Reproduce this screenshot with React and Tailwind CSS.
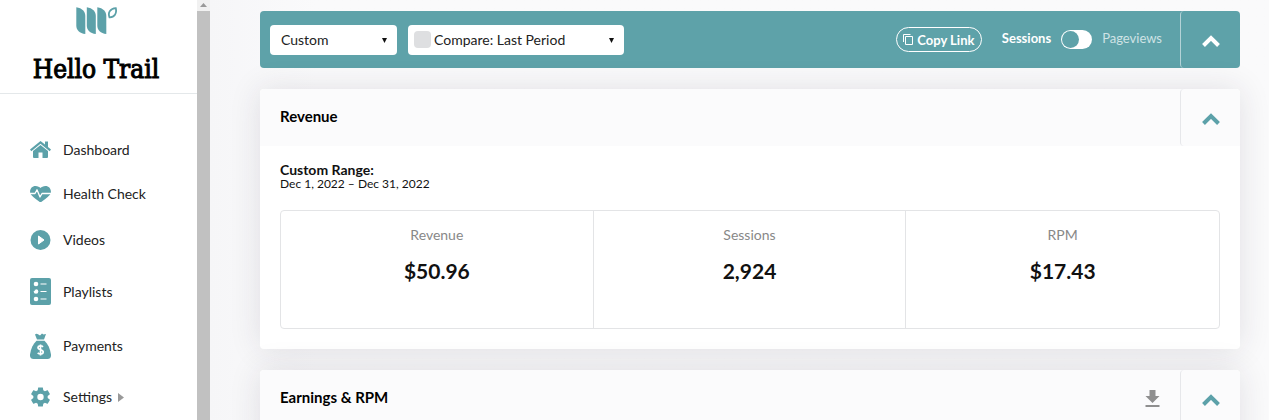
import { useState } from 'react'

const navItems = [
  { label: 'Dashboard', icon: HomeIcon },
  { label: 'Health Check', icon: HeartIcon },
  { label: 'Videos', icon: PlayIcon },
  { label: 'Playlists', icon: PlaylistIcon },
  { label: 'Payments', icon: MoneyBagIcon },
  { label: 'Settings', icon: GearIcon, hasChildren: true },
]

const stats = [
  { label: 'Revenue', value: '$50.96' },
  { label: 'Sessions', value: '2,924' },
  { label: 'RPM', value: '$17.43' },
]

function Logo() {
  return (
    <svg width="41" height="28" viewBox="0 0 41 28" fill="#5ca1a9" aria-hidden="true">
      <path d="M0.300 0.300C6 1 9.300 4.500 9.300 9V27C3.500 26.500 0.300 23 0.300 18.500Z" />
      <path d="M10.800 0.300C16.500 1 19.800 4.500 19.800 9V27C14 26.500 10.800 23 10.800 18.500Z" />
      <path d="M21.300 0.300C27 1 30.300 4.500 30.300 9V27C24.500 26.500 21.300 23 21.300 18.500Z" />
      <path d="M33.500 10.300C31.500 5.500 34.500 1.500 39.800 1.200C41 6.500 38.500 10.500 33.500 10.300Z" fill="none" stroke="#5ca1a9" strokeWidth="1.800" />
    </svg>
  )
}

function HomeIcon() {
  return (
    <svg width="21" height="17" viewBox="0 0 21 17" fill="#5ca1a9" aria-hidden="true">
      <path d="M10.500 0L0 8.500L1.300 10.200L10.500 2.800L19.700 10.200L21 8.500L18 6.100V0.500H15V3.600Z" />
      <path d="M10.500 4L3 10V16Q3 17 4 17H8.500V11.500H12.500V17H17Q18 17 18 16V10Z" />
    </svg>
  )
}

function HeartIcon() {
  return (
    <svg width="21" height="16" viewBox="0 0 21 16" fill="#5ca1a9" aria-hidden="true">
      <path d="M0.200 7C-0.500 3 2 0 5.500 0C7.800 0 9.500 1 10.500 2C11.500 1 13.200 0 15.500 0C19 0 21.500 3 20.800 7Q20 10 10.500 16.500Q1 10 0.200 7Z" />
      <path d="M0 7.500H5L7 3.800L10 11L12 7.500H21" fill="none" stroke="#fff" strokeWidth="1.300" strokeLinejoin="round" />
    </svg>
  )
}

function PlayIcon() {
  return (
    <svg width="21" height="20" viewBox="0 0 21 20" aria-hidden="true">
      <circle cx="10.500" cy="10" r="10" fill="#5ca1a9" />
      <path d="M8.500 6L14 10L8.500 14Z" fill="#fff" stroke="#fff" strokeLinejoin="round" />
    </svg>
  )
}

function PlaylistIcon() {
  return (
    <svg width="21" height="27" viewBox="0 0 21 27" aria-hidden="true">
      <rect width="21" height="27" rx="2" fill="#5ca1a9" />
      <circle cx="6" cy="6" r="2.300" fill="#fff" />
      <circle cx="6" cy="13.500" r="2.300" fill="#fff" />
      <circle cx="6" cy="21" r="2.300" fill="#fff" />
      <path d="M3.500 11.200H6L3.500 13.700Z" fill="#5ca1a9" />
      <path d="M10.500 6H16.500M10.500 13.500H16.500M10.500 21H16.500" stroke="#fff" strokeWidth="1.200" />
    </svg>
  )
}

function MoneyBagIcon() {
  return (
    <svg width="21" height="26" viewBox="0 0 21 26" fill="#5ca1a9" aria-hidden="true">
      <path d="M7 6.500L5 1.500Q6.500 0 8 1.200L10 2.500L12 0.500L13.500 1.500L16 1L14 6.500Z" />
      <path d="M6.500 7.800H14.500C18 11 20 15.500 21 21.500C21.300 24.500 20 26 17.500 26H3.500C1 26 -0.300 24.500 0 21.500C1 15.500 3 11 6.500 7.800Z" />
      <path d="M13 13.800C11.500 12.200 8 12.500 8 14.600C8 17.500 13.200 16 13.200 19C13.200 21.300 9.500 21.600 7.700 19.800M10.500 11.500V22.500" fill="none" stroke="#fff" strokeWidth="1.700" />
    </svg>
  )
}

function GearIcon() {
  return (
    <svg width="21" height="20" viewBox="2 2 20 20" fill="#5ca1a9" aria-hidden="true">
      <path d="M19.140 12.940c.040-.300.060-.610.060-.940 0-.320-.020-.640-.070-.940l2.030-1.580c.180-.140.230-.410.120-.610l-1.920-3.320c-.120-.220-.370-.290-.590-.220l-2.390.960c-.500-.380-1.030-.700-1.620-.940l-.360-2.540c-.040-.240-.240-.410-.480-.410h-3.840c-.240 0-.430.170-.470.410l-.360 2.540c-.590.240-1.130.570-1.620.940l-2.390-.960c-.220-.080-.470 0-.590.220L2.740 8.870c-.120.210-.080.470.120.610l2.030 1.580c-.050.300-.090.630-.090.940s.020.640.070.940l-2.030 1.580c-.180.140-.230.410-.120.610l1.920 3.320c.120.220.370.290.590.220l2.390-.960c.500.380 1.030.700 1.620.940l.360 2.540c.050.240.240.410.480.410h3.840c.240 0 .440-.170.470-.410l.360-2.540c.590-.240 1.130-.560 1.620-.940l2.390.960c.220.080.470 0 .590-.220l1.920-3.320c.120-.220.070-.470-.120-.610l-2.010-1.580zM12 15.200a3.200 3.200 0 1 1 0-6.400 3.200 3.200 0 0 1 0 6.400z" />
    </svg>
  )
}

function ChevronUp() {
  return (
    <svg width="18" height="12" viewBox="0 0 18 12" fill="none" stroke="currentColor" strokeWidth="4" aria-hidden="true">
      <path d="M1.500 10.500L9 3L16.500 10.500" />
    </svg>
  )
}

function Caret() {
  return (
    <svg className="pointer-events-none absolute right-2.5 top-3" width="5" height="6" viewBox="0 0 5 6" aria-hidden="true">
      <path d="M0 1H5L2.500 6Z" fill="#111" />
    </svg>
  )
}

function Sidebar() {
  return (
    <aside className="flex w-[210px] shrink-0 bg-white">
      <div className="min-w-0 flex-1">
        <div className="flex h-[94px] flex-col items-center border-b border-[#e4e8ea] pt-[7px] pr-[5px]">
          <Logo />
          <h1 className="mt-[18px] font-['DejaVu_Serif_Condensed','DejaVu_Serif',serif] text-[26px] leading-[32px] text-black [-webkit-text-stroke:1px_black]">
            Hello Trail
          </h1>
        </div>
        <nav className="flex flex-col gap-7 pl-[30px] pt-[47px]">
          {navItems.map(({ label, icon: Icon, hasChildren }) => (
            <a key={label} href="#" className="flex items-center text-[14px] leading-4 text-[#222]">
              <Icon />
              <span className="ml-3">{label}</span>
              {hasChildren && (
                <svg className="ml-1.5" width="6" height="9" viewBox="0 0 6 9" aria-hidden="true">
                  <path d="M0 0L6 4.500L0 9Z" fill="#999" />
                </svg>
              )}
            </a>
          ))}
        </nav>
      </div>
      <div className="flex w-[13px] flex-col items-center bg-[#f1f1f1]">
        <svg className="my-[3px]" width="7" height="5" viewBox="0 0 7 5" aria-hidden="true">
          <path d="M0 4L3.500 0L7 4Z" fill="#999" />
        </svg>
        <div className="w-full flex-1 bg-[#c1c1c1]" />
      </div>
    </aside>
  )
}

function FilterBar() {
  const [pageviews, setPageviews] = useState(false)

  return (
    <div className="flex h-[57px] rounded bg-[#5ea2a9] text-white">
      <div className="flex flex-1 items-center pl-2.5">
        <div className="relative w-[127px]">
          <select aria-label="Date range" className="h-[30px] w-full appearance-none rounded bg-white px-[11px] text-[14px] text-[#222]">
            <option>Custom</option>
          </select>
          <Caret />
        </div>
        <div className="relative ml-[11px] flex h-[30px] w-[216px] items-center rounded bg-white pl-1.5">
          <input type="checkbox" aria-label="Compare" className="size-[17px] appearance-none rounded bg-[#dedfe1] checked:bg-[#5ea2a9]" />
          <select aria-label="Compare period" className="h-full flex-1 appearance-none pl-[3px] text-[14px] text-[#222]">
            <option>Compare: Last Period</option>
          </select>
          <Caret />
        </div>
        <button className="ml-auto flex h-[25px] w-[86px] items-center justify-center gap-1 rounded-full border border-white text-[13px] leading-4 font-bold">
          <svg width="10" height="11" viewBox="0 0 10 11" fill="none" stroke="#fff" aria-hidden="true">
            <path d="M2.500 2.500H9.500V10.500H2.500ZM0.500 8V0.500H7.500" />
          </svg>
          Copy Link
        </button>
        <label className="ml-5 flex items-center text-[13px] leading-4">
          <span className="pb-[3px] font-bold">Sessions</span>
          <input
            type="checkbox"
            role="switch"
            checked={pageviews}
            onChange={(event) => setPageviews(event.target.checked)}
            className="ml-2.5 h-[19px] w-[31px] appearance-none rounded-full bg-white p-px before:block before:size-[17px] before:rounded-full before:bg-[#5ea2a9] checked:before:ml-3"
          />
          <span className="ml-2.5 pb-[3px] text-[#cfe3e5]">Pageviews</span>
        </label>
      </div>
      <button aria-label="Collapse filters" className="ml-[18px] flex w-[60px] items-center justify-center rounded border-l border-[#b4d3d7] pt-[3px]">
        <ChevronUp />
      </button>
    </div>
  )
}

function Card({ title, action, children }) {
  return (
    <section className="rounded bg-white shadow-[0_0_32px_rgba(40,30,60,0.12)]">
      <header className="flex h-[57px] items-center rounded-t bg-[#fbfbfc]">
        <h2 className="flex-1 pb-[3px] pl-5 text-[15px] leading-5 font-bold text-black">{title}</h2>
        {action}
        <button aria-label={`Collapse ${title}`} className="flex h-full w-[60px] items-center justify-center rounded border-l border-[#e6e7ea] pt-[3px] text-[#5ca1a9]">
          <ChevronUp />
        </button>
      </header>
      {children}
    </section>
  )
}

export default function App() {
  return (
    <div className="flex h-screen overflow-hidden bg-[#fafafb] font-[Lato,'Open_Sans',sans-serif]">
      <Sidebar />
      <main className="flex min-w-0 flex-1 flex-col gap-[21px] bg-linear-to-r from-[#f6f6f8] to-[#fafafb] to-10% pt-[11px] pr-[29px] pl-[50px] *:shrink-0">
        <FilterBar />
        <Card title="Revenue">
          <div className="px-5 pt-[17px] pb-5 text-[#111]">
            <p className="text-[14px] leading-[14px] font-bold">Custom Range:</p>
            <p className="text-[12px] leading-[13px]">Dec 1, 2022 – Dec 31, 2022</p>
            <dl className="mt-5 grid h-[119px] grid-cols-3 divide-x divide-[#e3e4e6] rounded border border-[#e3e4e6] text-center">
              {stats.map((stat) => (
                <div key={stat.label} className="pt-4">
                  <dt className="text-[14px] leading-4 text-[#888]">{stat.label}</dt>
                  <dd className="mt-4 text-[21px] leading-6 font-bold text-[#111]">{stat.value}</dd>
                </div>
              ))}
            </dl>
          </div>
        </Card>
        <Card
          title="Earnings & RPM"
          action={
            <button aria-label="Download" className="mr-5">
              <svg width="15" height="17" viewBox="0 0 15 17" fill="#8f8f8f" aria-hidden="true">
                <path d="M4.500 0H10.500V6H14.500L7.500 13L0.500 6H4.500ZM0.500 15H14.500V17H0.500Z" />
              </svg>
            </button>
          }
        >
          <div className="h-40" />
        </Card>
      </main>
    </div>
  )
}
